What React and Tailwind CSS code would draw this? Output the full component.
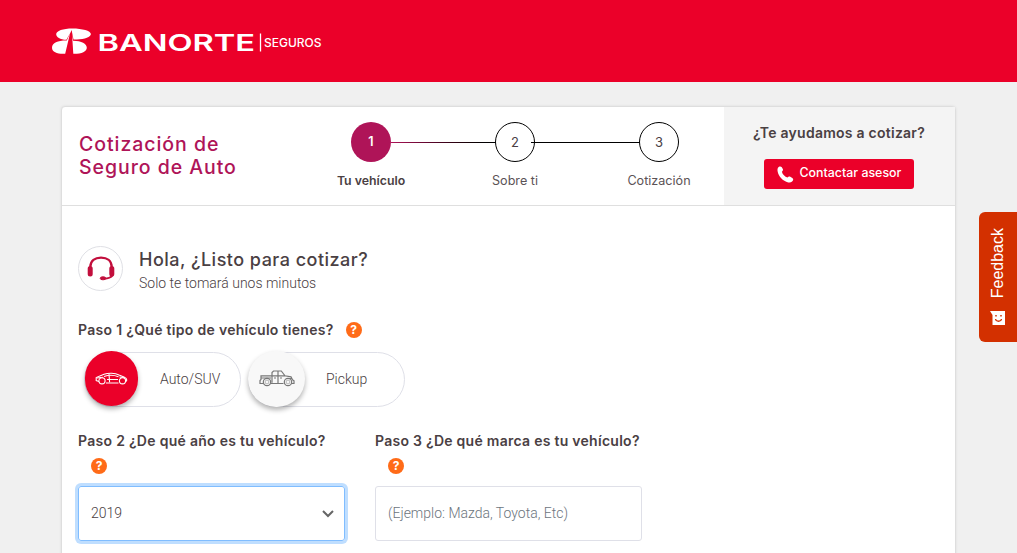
function T({ x, y, w, size, weight, fill, children, family }) {
  return (
    <text x={x} y={y} textLength={w} lengthAdjust="spacingAndGlyphs" fontSize={size} fontWeight={weight} fill={fill} fontFamily={family || 'Inter, sans-serif'}>
      {children}
    </text>
  );
}

function Logo() {
  return (
    <svg width="280" height="34" viewBox="0 0 280 34" aria-label="Banorte Seguros">
      <g fill="#fff">
        <path d="M18.300 9 14.400 15.800C8 15.500 4.200 13.200 4.200 10.200 4.200 6.600 11 4.400 20.500 4.400S38.900 6.600 38.900 10.100c0 3.100-6 5.200-14.200 5.400h-3.200L19.600 6z" />
        <path d="M18 9.500 13.200 29.700C6.500 30.300 0 28.400 0 23.700 0 18.800 6.500 16.300 14.800 16.500z" />
        <path d="M20 10l1.300 19.800c8 .2 13.500-2.200 13.500-6.100 0-4-5.200-7-13.700-7z" />
      </g>
      <T x="45.500" y="27" w="157.500" size="22.800" weight="600" fill="#fff">BANORTE</T>
      <path d="M208.500 9.500v18" stroke="#fff" strokeWidth="1.300" />
      <T x="212" y="22.800" w="57.500" size="11.500" weight="500" fill="#fff">SEGUROS</T>
    </svg>
  );
}

function Help() {
  return (
    <span className="flex h-4 w-4 items-center justify-center rounded-full bg-[#ff6b18] font-[Inter] text-[12px] font-bold leading-none tracking-normal text-white">?</span>
  );
}

function Step({ n, label, active }) {
  return (
    <div className="flex w-36 shrink-0 flex-col items-center">
      <div className={active ? 'flex h-10 w-10 items-center justify-center rounded-full bg-[#af1458] pt-px text-[12.500px] font-semibold text-white' : 'flex h-10 w-10 items-center justify-center rounded-full border border-black bg-white pt-px text-[13px] text-[#4a4043]'}>{n}</div>
      <div className={active ? 'mt-2.5 text-[12.300px] leading-[18px] font-semibold text-[#4a4043]' : 'mt-2.5 text-[12.600px] leading-[18px] text-[#5b5356]'}>{label}</div>
    </div>
  );
}

function Headset() {
  return (
    <svg width="28" height="26" viewBox="0 0 28 26" fill="none" stroke="#c20e3c">
      <path d="M3.300 12C3.300 5.500 8 2.600 14 2.600S24.700 5.500 24.700 12" strokeWidth="2.200" />
      <path d="M3.200 13.500v5.500M24.800 13.500v5.500" strokeWidth="5" strokeLinecap="round" />
      <path d="M25.500 20.500c-1.500 2-4.500 3-8.500 3.200" strokeWidth="2" />
      <ellipse cx="16" cy="23.300" rx="2.800" ry="1.500" fill="#c20e3c" />
    </svg>
  );
}

function CarIcon() {
  return (
    <svg width="33" height="13" viewBox="0 0 33 13" fill="none" stroke="#fff" strokeWidth="1.100">
      <path d="M4 9.500 1.200 8.500V5.500L9 2.300C13 .8 20 .7 24 3l5 1.900c2 .8 3 2.600 2.500 3.900l-1 .8M11 11h12.500" />
      <path d="M9 4.600c4-1.500 10-1.600 14.500.2M14 2.300l.6 8M2 6l6-.8M24.500 5l5 .8M12 7.500h11" />
      <circle cx="7" cy="8.800" r="3.100" fill="#eb0029" /><circle cx="27.500" cy="8.800" r="3.100" fill="#eb0029" />
    </svg>
  );
}

function PickupIcon() {
  return (
    <svg width="36" height="17" viewBox="0 0 36 17" fill="none" stroke="#777" strokeWidth="1.200">
      <path d="M4 13.500H1v-3l1-1V5.800h11V2.500L14.500 1h7.800l3.700 4.800 6 1 1.500 3 1.500 1v2.700h-2M12 13.500h12.500M13 5.800v7M19 1v12M13 5.800h13M2 8h10M15 8h2M21 8h2M29 8.500h4" />
      <circle cx="8" cy="12" r="3.700" fill="#f8f8f8" /><circle cx="29" cy="12" r="3.700" fill="#f8f8f8" />
      <circle cx="8" cy="12" r="1.900" strokeWidth=".5" /><circle cx="29" cy="12" r="1.900" strokeWidth=".5" />
    </svg>
  );
}

export default function App() {
  return (
    <div className="relative flex h-[553px] w-[1017px] flex-col overflow-hidden bg-[#f0f0f0] font-[Inter,sans-serif] text-[#4a4043]">
      <header className="h-[82px] shrink-0 bg-[#eb0029] pt-6 pl-[52px]"><Logo /></header>
      <main className="mt-6 ml-[61px] h-[480px] w-[895px] shrink-0 rounded border border-[#dedede] bg-white shadow-[0_0_3px_rgba(0,0,0,0.08)]">
        <div className="flex h-[99px] border-b border-[#dfdfdf]">
          <h1 className="w-[237px] shrink-0 pt-[26px] pl-[17px] text-[19.500px] leading-[23px] font-medium tracking-[0.950px] whitespace-nowrap text-[#af1458]">Cotización de<br />Seguro de Auto</h1>
          <div className="relative flex w-[425px] shrink-0 pt-[15px]">
            <div className="absolute top-[35px] left-[92px] h-px w-[105px] bg-linear-to-r from-[#af1458] to-black" />
            <Step n="1" label="Tu vehículo" active />
            <Step n="2" label="Sobre ti" />
            <Step n="3" label="Cotización" />
            <div className="absolute top-[35px] left-[232px] h-px w-[109px] bg-black" />
          </div>
          <aside className="flex flex-1 flex-col items-center bg-[#f4f4f4] pt-4 pr-0.5">
            <p className="pl-px text-[14px] leading-5 font-semibold tracking-[0.250px]">¿Te ayudamos a cotizar?</p>
            <button className="mt-4 flex h-[30px] w-[150px] items-center rounded-[3px] bg-[#eb0029] pl-[13px] text-[12.400px] font-medium whitespace-nowrap text-white">
              <svg width="17" height="17" viewBox="0 0 17 17" fill="#fff" className="mr-[6px]"><path d="M1 1.800C2 .2 3.800-.1 4.800 1.300l1 1.600c.6 1.100 0 2-.9 2.800.6 2.600 3 5 5.600 5.900.8-1 1.700-1.400 2.800-.8l2 1.200c1.400.9 1.100 2.500-.2 3.600-1 .9-2.400 1.100-3.800.8C5.800 15 1.500 10.300.6 5.200.4 3.800.4 2.800 1 1.800z" /></svg>
              <span className="-mt-0.5">Contactar asesor</span>
            </button>
          </aside>
        </div>
        <div className="flex flex-col pl-4">
          <div className="mt-[39px] flex h-[46px] items-center gap-4">
            <div className="flex h-[45px] w-[45px] items-center justify-center rounded-full border border-[#dfe0e5]"><Headset /></div>
            <div className="pt-1.5">
              <h2 className="text-[18px] leading-6 font-medium tracking-[0.480px]">Hola, ¿Listo para cotizar?</h2>
              <p className="font-[Roboto] text-[14px] leading-[22px] font-light">Solo te tomará unos minutos</p>
            </div>
          </div>
          <div className="mt-[29px] flex h-5 items-center text-[14px] font-semibold tracking-[0.300px]">
            <span className="mr-3 -mt-0.5">Paso 1 ¿Qué tipo de vehículo tienes?</span>
            <Help />
          </div>
          <div className="mt-3 flex gap-[7px] pl-[6px] font-[Roboto] text-[14px] font-light">
            <div className="flex h-[55px] w-[157px] items-center rounded-full border border-[#dfe0e8]">
              <div className="mb-[3px] flex h-[55px] w-[53px] shrink-0 items-center justify-center rounded-full bg-[#eb0029] shadow-[0_3px_5px_rgba(0,0,0,0.3)]"><CarIcon /></div>
              <span className="ml-[22px]">Auto/SUV</span>
            </div>
            <div className="flex h-[55px] w-[157px] items-center rounded-full border border-[#dfe0e8]">
              <div className="-ml-px mb-0.5 flex h-[56px] w-[57px] shrink-0 items-center justify-center rounded-full bg-[#f8f8f8] shadow-[0_3px_5px_rgba(0,0,0,0.3)]"><PickupIcon /></div>
              <span className="ml-[21px]">Pickup</span>
            </div>
          </div>
          <div className="mt-6 flex gap-[30px] text-[14px] font-semibold">
            <div className="w-[267px]">
              <div className="h-5 leading-5 tracking-[0.290px] whitespace-nowrap">Paso 2 ¿De qué año es tu vehículo?</div>
              <div className="mt-[7px] ml-[13px]"><Help /></div>
              <div className="mt-3 flex h-[55px] items-center justify-between rounded-[3px] border border-[#80bdff] pr-[10px] pl-3 font-[Roboto] font-light shadow-[0_0_0_3px_#bfdeff]">
                2019
                <svg width="12" height="8" viewBox="0 0 12 8" fill="none" stroke="#666" strokeWidth="2"><path d="m1 1 5 5 5-5" /></svg>
              </div>
            </div>
            <div className="w-[267px]">
              <div className="h-5 leading-5 tracking-[0.270px] whitespace-nowrap">Paso 3 ¿De qué marca es tu vehículo?</div>
              <div className="mt-[7px] ml-[13px]"><Help /></div>
              <div className="mt-3 flex h-[55px] items-center rounded-[3px] border border-[#dfe0e8] pl-3 font-[Roboto] font-light text-[#6c757d]">(Ejemplo: Mazda, Toyota, Etc)</div>
            </div>
          </div>
        </div>
      </main>
      <button className="absolute top-[212px] right-0 flex h-[130px] w-[38px] flex-col items-center justify-end rounded-l-md bg-[#d33000] pb-4 text-white">
        <span className="rotate-180 font-['Liberation_Sans'] text-[16px] leading-5 [writing-mode:vertical-rl]">Feedback</span>
        <svg width="16" height="15" viewBox="0 0 16 15" className="mt-[13px]"><path d="M0 0h15v14H2.500V4z" fill="#fff" /><path d="M5.500 8c.5 3 5.500 3 6 0" fill="none" stroke="#d33000" strokeWidth="1.300" /><path d="M6 4v1.500M11 4v1.500" stroke="#d33000" strokeWidth="1.500" /></svg>
      </button>
    </div>
  );
}
